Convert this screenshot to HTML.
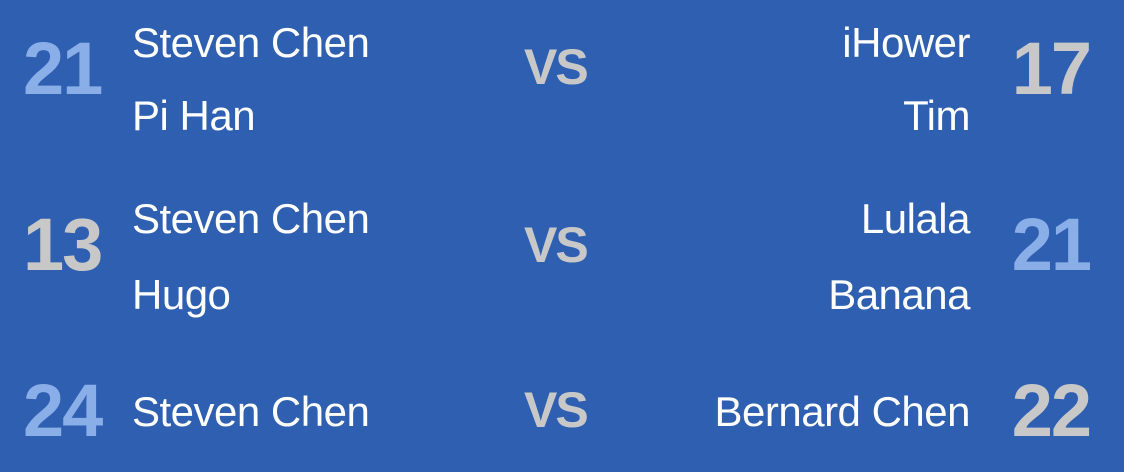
<!DOCTYPE html>
<html><head><style>
body{margin:0;width:1124px;height:472px;background:#2e5fb1;overflow:hidden;position:relative;font-family:"Liberation Sans",sans-serif}
.n{position:absolute;color:#fff;font-size:42px;height:60px;line-height:60px;white-space:nowrap;letter-spacing:-0.5px}
.l{left:132px}
.r{right:154px;text-align:right}
.s{position:absolute;font-weight:bold;font-size:74px;height:90px;line-height:90px;letter-spacing:-2px}
.b{color:#8aaee8}.g{color:#c8c8c8}
.vs{position:absolute;left:524px;color:#c8c8c8;font-weight:bold;font-size:50px;height:60px;line-height:60px;letter-spacing:-2px}
</style></head><body>
<div class="s b" style="left:23px;top:24px">21</div>
<div class="n l" style="top:13px">Steven Chen</div>
<div class="n l" style="top:86px">Pi Han</div>
<div class="vs" style="top:37px">VS</div>
<div class="n r" style="top:13px">iHower</div>
<div class="n r" style="top:86px">Tim</div>
<div class="s g" style="right:34px;top:24px">17</div>

<div class="s g" style="left:23px;top:200px">13</div>
<div class="n l" style="top:189px">Steven Chen</div>
<div class="n l" style="top:265px">Hugo</div>
<div class="vs" style="top:215px">VS</div>
<div class="n r" style="top:189px">Lulala</div>
<div class="n r" style="top:265px">Banana</div>
<div class="s b" style="right:34px;top:200px">21</div>

<div class="s b" style="left:23px;top:366px">24</div>
<div class="n l" style="top:382px">Steven Chen</div>
<div class="vs" style="top:380px">VS</div>
<div class="n r" style="top:382px">Bernard Chen</div>
<div class="s g" style="right:34px;top:366px">22</div>
</body></html>
